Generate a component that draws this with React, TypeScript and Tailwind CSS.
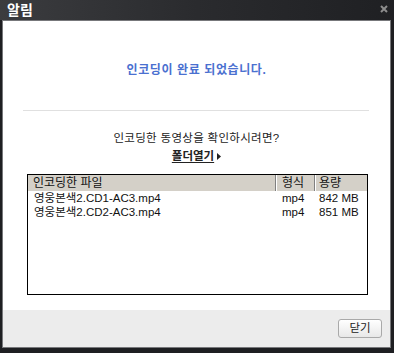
import React from 'react';

const files = [
  { name: '영웅본색2.CD1-AC3.mp4', type: 'mp4', size: '842 MB' },
  { name: '영웅본색2.CD2-AC3.mp4', type: 'mp4', size: '851 MB' },
];

const font = "font-['Liberation_Sans','Noto_Sans_CJK_KR',sans-serif]";

const App: React.FC = () => {
  return (
    <div className={`w-[394px] h-[353px] bg-[#1e1f22] flex flex-col ${font}`}>
      {/* Title bar */}
      <div className="h-[20px] flex items-center justify-between pl-[7px] pr-[6px] bg-gradient-to-r from-[#3b3c3f] via-[#2a2b2e] to-[#1f2023]">
        <span className="text-white text-[14px] font-bold leading-none">알림</span>
        <svg width="8" height="8" viewBox="0 0 8 8" className="mb-[2px]">
          <path d="M1 1 L7 7 M7 1 L1 7" stroke="#8d8d8d" strokeWidth="2" />
        </svg>
      </div>

      {/* Panel */}
      <div className="flex-1 ml-[2px] mr-[3px] mb-[5px] border border-[#77787b] flex flex-col">
        <div className="flex-1 bg-white flex flex-col items-center">
          <p className="mt-[42px] text-[12px] font-bold text-[#4a70d0] leading-[14px] tracking-[0.6px]">
            인코딩이 완료 되었습니다.
          </p>
          <div className="mt-[33px] w-[346px] h-px bg-[#e0e0e0] ml-[-2px]" />
          <p className="mt-[20px] text-[11.5px] text-[#222] leading-[14px] tracking-[0.3px]">
            인코딩한 동영상을 확인하시려면?
          </p>
          <div className="mt-[4px] flex items-center gap-[3px]">
            <span className="text-[11.5px] font-bold text-[#222] underline underline-offset-2 leading-[14px]">
              폴더열기
            </span>
            <svg width="4" height="7" viewBox="0 0 4 7">
              <path d="M0 0 L4 3.5 L0 7 Z" fill="#222" />
            </svg>
          </div>

          {/* File list */}
          <div className="mt-[11px] w-[341px] h-[121px] border border-black self-start ml-[24px] flex flex-col text-[12px] text-[#111]">
            <div className="h-[16px] bg-[#d4d0c8] flex items-center leading-none">
              <div className="w-[248px] h-full flex items-center pl-[5px] border-r border-r-[#808080] shadow-[1px_0_0_#fff]">
                인코딩한 파일
              </div>
              <div className="w-[39px] h-full flex items-center pl-[6px] border-r border-r-[#808080] shadow-[1px_0_0_#fff]">
                형식
              </div>
              <div className="flex-1 h-full flex items-center pl-[4px]">용량</div>
            </div>
            {files.map((f) => (
              <div key={f.name} className="h-[13px] flex items-center leading-none mt-[1px] text-[11.5px]">
                <div className="w-[248px] pl-[6px]">{f.name}</div>
                <div className="w-[39px] pl-[6px]">{f.type}</div>
                <div className="flex-1 pl-[4px]">{f.size}</div>
              </div>
            ))}
          </div>
        </div>

        {/* Footer */}
        <div className="h-[37px] bg-[#ececec] flex items-center justify-end pr-[8px]">
          <button className="w-[44px] h-[19px] rounded-[3px] border border-[#a9a9a9] bg-gradient-to-b from-white to-[#e8e8e8] text-[11.5px] text-[#222] leading-none">
            닫기
          </button>
        </div>
      </div>
    </div>
  );
};

export default App;
